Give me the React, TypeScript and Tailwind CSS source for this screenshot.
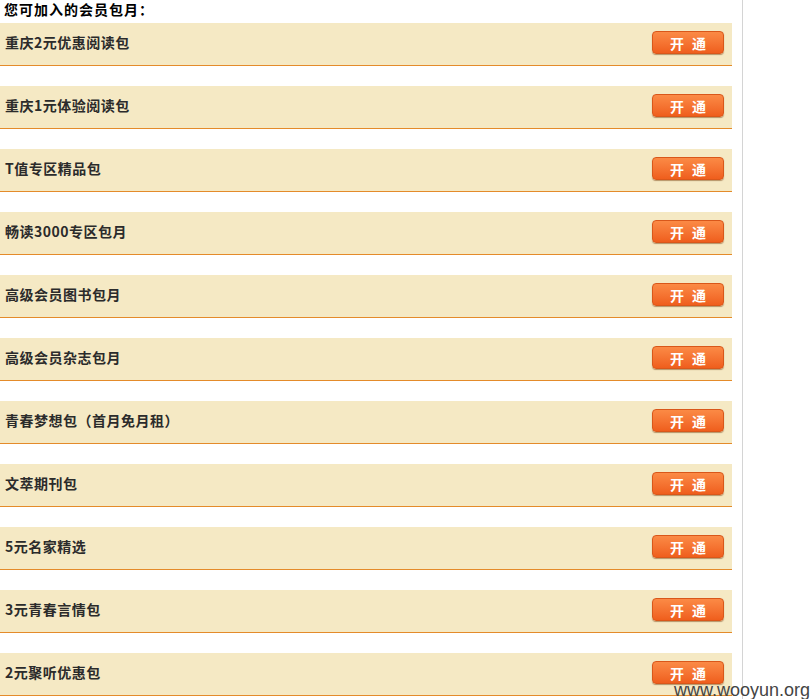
const PACKAGES = [
  '重庆2元优惠阅读包',
  '重庆1元体验阅读包',
  'T值专区精品包',
  '畅读3000专区包月',
  '高级会员图书包月',
  '高级会员杂志包月',
  '青春梦想包（首月免月租）',
  '文萃期刊包',
  '5元名家精选',
  '3元青春言情包',
  '2元聚听优惠包',
]

function OpenButton() {
  return (
    <button className="w-[72px] h-[23px] rounded-[4px] border border-[#d9571a] bg-gradient-to-b from-[#fb8a45] to-[#ef5e1c] text-white text-[14px] font-bold leading-none tracking-[8px] pl-[8px] shadow-[0_1px_1px_rgba(120,60,10,0.5)]">
      开通
    </button>
  )
}

export default function App() {
  return (
    <div className="relative h-[699px] w-[812px] overflow-hidden bg-white font-['Noto_Sans_CJK_SC',sans-serif]">
      <div className="w-[743px] h-full border-r border-[#d4d4d4] pr-[10px]">
        <div className="h-[23px] pl-[4px] text-[14px] font-bold leading-[19px] tracking-[1px] text-black">
          您可加入的会员包月：
        </div>
        <div className="flex flex-col gap-[20px]">
          {PACKAGES.map((name) => (
            <div
              key={name}
              className="flex h-[43px] items-center justify-between border-b border-[#e48b2a] bg-[#f5e9c4] pl-[5px] pr-[8px] pb-[3px]"
            >
              <span className="text-[14px] font-bold tracking-[0.5px] text-[#2b2b2b]">{name}</span>
              <OpenButton />
            </div>
          ))}
        </div>
      </div>
      <div className="absolute right-[2px] bottom-0 text-[18px] leading-[17px] text-[#444] font-['Liberation_Sans',sans-serif]">
        www.wooyun.org
      </div>
    </div>
  )
}
